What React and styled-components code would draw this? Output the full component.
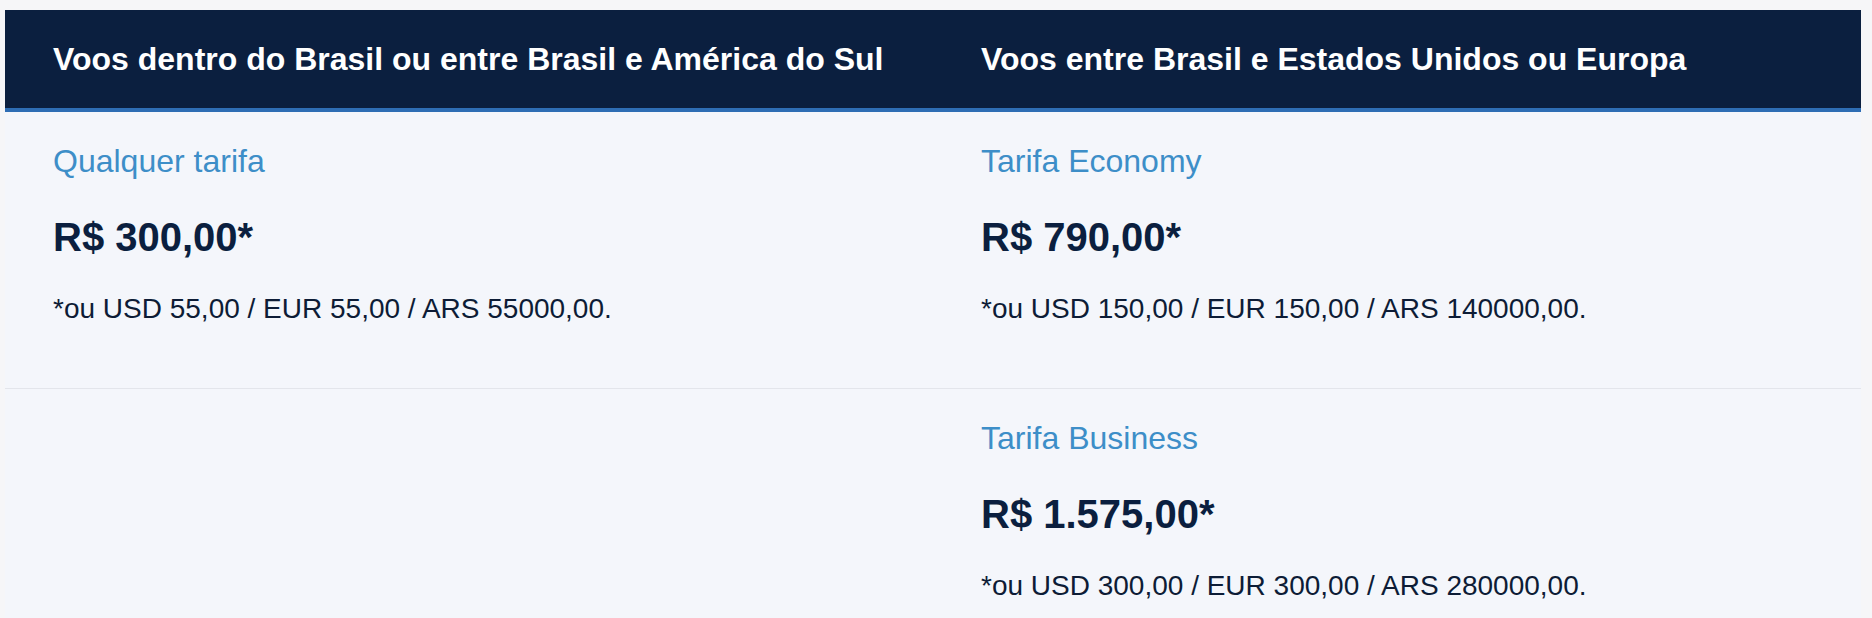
import React from 'react';
import styled, { createGlobalStyle } from 'styled-components';

const GlobalStyle = createGlobalStyle`
    body {
        margin: 0;
        background: #f6f6f8;
        font-family: "Liberation Sans", Arial, Helvetica, sans-serif;
    }
`;

const Page = styled.div`
    padding: 10px 11px 0 5px;
`;

const Table = styled.div`
    background: #f4f6fb;
`;

const HeaderRow = styled.div`
    display: grid;
    grid-template-columns: 1fr 1fr;
    background: #0b1f3f;
    border-bottom: 4px solid #2e6db4;
`;

const HeaderCell = styled.div`
    padding: 29px 48px;
    font-size: 32px;
    line-height: 40px;
    font-weight: 700;
    color: #ffffff;
`;

const Row = styled.div`
    display: grid;
    grid-template-columns: 1fr 1fr;
    border-bottom: ${({ last }) => (last ? 'none' : '1px solid #e3e5eb')};
`;

const Cell = styled.div`
    padding: 29px 48px 61px;
`;

const FareName = styled.div`
    font-size: 32px;
    line-height: 40px;
    color: #3d8ec8;
`;

const Price = styled.div`
    margin-top: 32px;
    font-size: 40px;
    line-height: 48px;
    font-weight: 700;
    color: #0b1f3f;
`;

const Note = styled.div`
    margin-top: 30px;
    font-size: 28px;
    line-height: 36px;
    color: #0d1c36;
`;

const rows = [
    [
        { name: 'Qualquer tarifa', price: 'R$ 300,00*', note: '*ou USD 55,00 / EUR 55,00 / ARS 55000,00.' },
        { name: 'Tarifa Economy', price: 'R$ 790,00*', note: '*ou USD 150,00 / EUR 150,00 / ARS 140000,00.' },
    ],
    [
        null,
        { name: 'Tarifa Business', price: 'R$ 1.575,00*', note: '*ou USD 300,00 / EUR 300,00 / ARS 280000,00.' },
    ],
];

const App = () => (
    <Page>
        <GlobalStyle />
        <Table>
            <HeaderRow>
                <HeaderCell>Voos dentro do Brasil ou entre Brasil e América do Sul</HeaderCell>
                <HeaderCell>Voos entre Brasil e Estados Unidos ou Europa</HeaderCell>
            </HeaderRow>
            {rows.map((row, i) => (
                <Row key={i} last={i === rows.length - 1}>
                    {row.map((fare, j) => (
                        <Cell key={j}>
                            {fare && (
                                <>
                                    <FareName>{fare.name}</FareName>
                                    <Price>{fare.price}</Price>
                                    <Note>{fare.note}</Note>
                                </>
                            )}
                        </Cell>
                    ))}
                </Row>
            ))}
        </Table>
    </Page>
);

export default App;
